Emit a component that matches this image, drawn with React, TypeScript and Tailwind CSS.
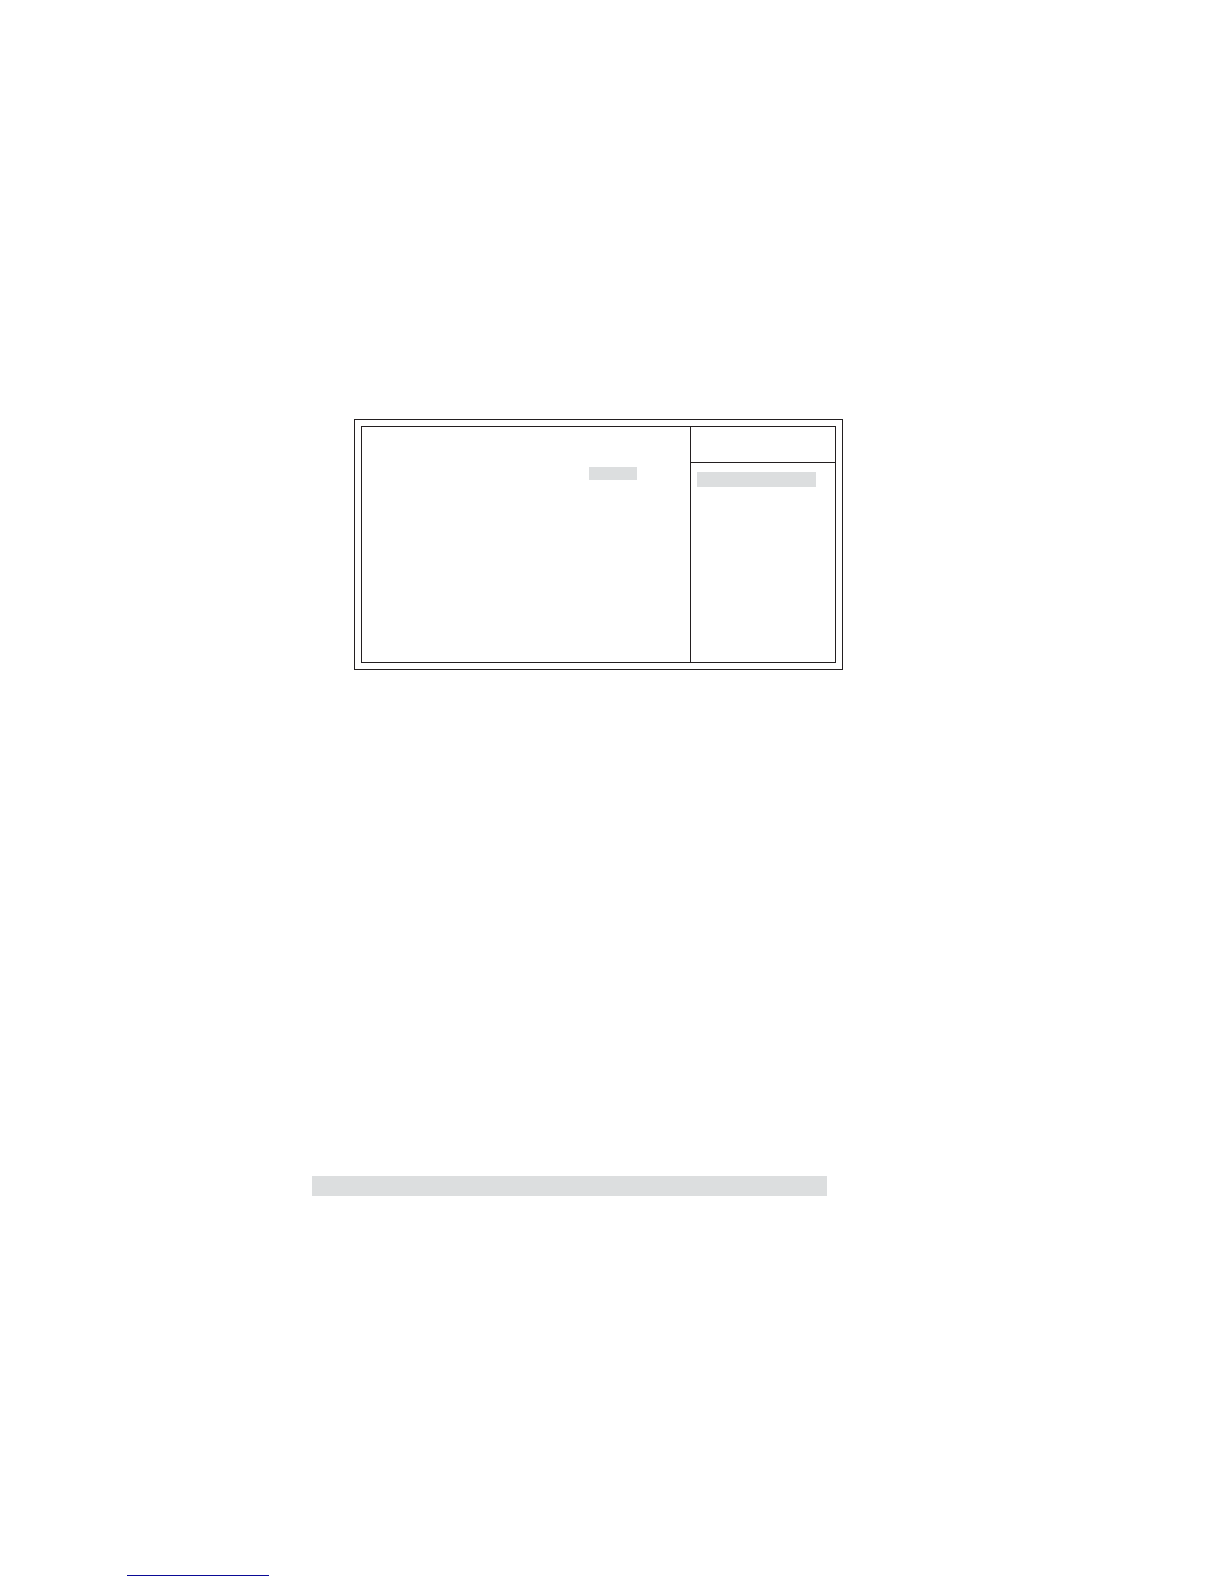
/**
 * Setup Screen Page — empty framed option panel with its highlight bars.
 */

import React from "react";

// Framed two-column panel: options on the left, titled help on the right
function SetupPanel() {
  return (
    <section className="border border-[#231f20] p-1.5">
      <div className="flex min-h-[237px] border border-[#231f20]">
        {/* ── Options ── */}
        <div className="flex flex-1 items-start justify-end pt-10 pr-[53px]">
          <div className="h-[13px] w-12 bg-[#dcdedf]" />
        </div>

        {/* ── Help ── */}
        <aside className="w-[145px] border-l border-[#231f20]">
          <div className="h-9 border-b border-[#231f20]" />
          <div className="mt-[9px] mr-[19px] ml-1.5 h-[15px] bg-[#dcdedf]" />
        </aside>
      </div>
    </section>
  );
}

export default function App() {
  return (
    <div className="min-h-screen bg-white">
      <main className="pt-[419px] pr-[381px] pl-[312px]">
        <div className="pl-[42px]">
          <SetupPanel />
        </div>

        {/* Highlighted row */}
        <div className="mt-[506px] mr-4 h-5 bg-[#dcdedf]" />
      </main>

      {/* ── Footer ── */}
      <footer className="mt-[379px] pl-[127px]">
        <div className="h-px w-[142px] bg-[#0a0a96]" />
      </footer>
    </div>
  );
}
